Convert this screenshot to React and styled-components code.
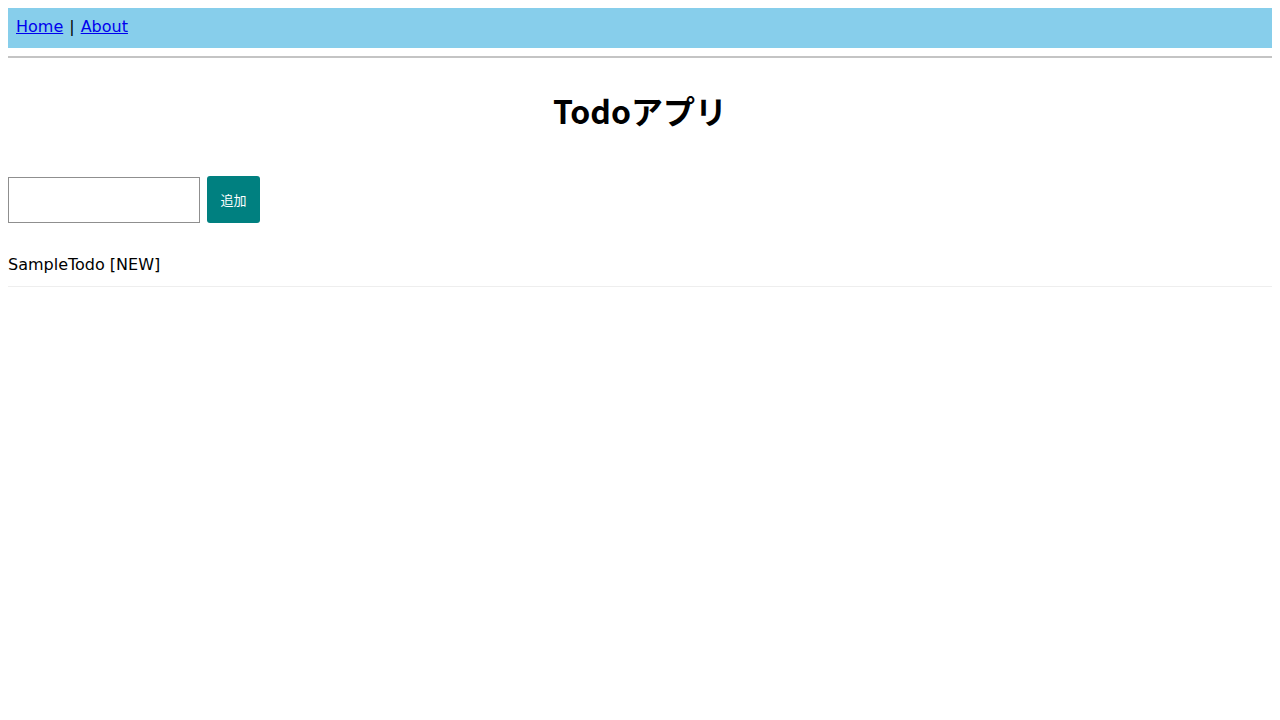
import React from "react";
import styled, { createGlobalStyle } from "styled-components";

const Global = createGlobalStyle`
  body {
    margin: 8px;
    font-family: "DejaVu Sans", "Noto Sans CJK JP", sans-serif;
    font-size: 16px;
    color: #000;
    background: #fff;
  }
`;

const Nav = styled.nav`
  background: #87ceeb;
  height: 40px;
  box-sizing: border-box;
  padding: 0 8px 2px;
  display: flex;
  align-items: center;
  gap: 6px;
  font-size: 16px;
  line-height: 20px;
`;

const NavLink = styled.a`
  color: #0000ee;
  text-decoration: underline;
`;

const Rule = styled.hr`
  margin: 8px 0 0;
  border: none;
  border-top: 2px solid #c4c4c4;
  height: 0;
`;

const Title = styled.h1`
  text-align: center;
  font-family: "Noto Sans CJK JP", sans-serif;
  font-size: 32px;
  font-weight: bold;
  margin: 28px 0 42px;
  line-height: 48px;
`;

const Form = styled.div`
  display: flex;
  align-items: center;
  gap: 7px;
`;

const Input = styled.input`
  width: 192px;
  height: 46px;
  box-sizing: border-box;
  border: 1px solid #8f8f8f;
  padding: 0 6px;
  font-size: 16px;
`;

const AddButton = styled.button`
  width: 53px;
  height: 47px;
  background: #008080;
  color: #fff;
  border: none;
  border-radius: 3px;
  font-family: "Noto Sans CJK JP", sans-serif;
  font-size: 13px;
  padding: 0;
`;

const List = styled.ul`
  list-style: none;
  margin: 18px 0 0;
  padding: 0;
`;

const Item = styled.li`
  font-size: 16px;
  line-height: 24px;
  padding: 12px 0 9px;
  border-bottom: 1px solid #eeeeee;
`;

export default function App() {
  return (
    <>
      <Global />
      <Nav>
        <NavLink href="#">Home</NavLink>
        <span>|</span>
        <NavLink href="#">About</NavLink>
      </Nav>
      <Rule />
      <Title>Todoアプリ</Title>
      <Form>
        <Input type="text" />
        <AddButton>追加</AddButton>
      </Form>
      <List>
        <Item>SampleTodo [NEW]</Item>
      </List>
    </>
  );
}
